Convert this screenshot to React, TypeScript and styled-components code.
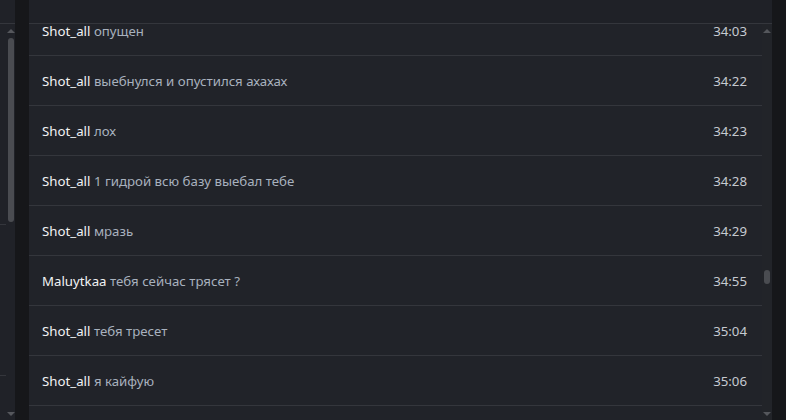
import React from 'react';
import styled, { createGlobalStyle } from 'styled-components';

const GlobalStyle = createGlobalStyle`
  html, body {
    margin: 0;
    padding: 0;
    background: #16171a;
    overflow: hidden;
  }
`;

const Screen = styled.div`
  display: flex;
  width: 786px;
  height: 420px;
  overflow: hidden;
  background: #16171a;
  font-family: 'Noto Sans', 'Open Sans', sans-serif;
`;

// Left pane peeking in from the previous window
const SidePane = styled.div`
  display: flex;
  width: 15px;
  flex-shrink: 0;
  background: #202228;
  position: relative;
`;

const SideList = styled.div`
  width: 6px;
  display: flex;
  flex-direction: column;
  padding-top: 23px;
`;

const SideRow = styled.div<{ $h: number }>`
  height: ${(p) => p.$h}px;
  border-top: 1px solid #34363c;
  flex-shrink: 0;
`;

const SideTopLine = styled.div`
  position: absolute;
  left: 0;
  right: 0;
  top: 23px;
  height: 1px;
  background: #34363c;
`;

const ScrollTrack = styled.div<{ $w: number; $bg?: string }>`
  width: ${(p) => p.$w}px;
  flex-shrink: 0;
  display: flex;
  flex-direction: column;
  align-items: center;
  background: ${(p) => p.$bg || 'transparent'};
`;

const Spacer = styled.div<{ $h?: number }>`
  flex: ${(p) => (p.$h === undefined ? 1 : 'none')};
  height: ${(p) => (p.$h === undefined ? 'auto' : `${p.$h}px`)};
`;

const Arrow = styled.div<{ $down?: boolean }>`
  width: 0;
  height: 0;
  border-left: 4px solid transparent;
  border-right: 4px solid transparent;
  ${(p) => (p.$down ? 'border-top: 4px solid #55575c;' : 'border-bottom: 4px solid #55575c;')}
`;

const Thumb = styled.div<{ $h: number }>`
  width: 6px;
  height: ${(p) => p.$h}px;
  border-radius: 3px;
  background: #4a4c51;
`;

const Gutter = styled.div`
  width: 14px;
  flex-shrink: 0;
  background: #16171a;
`;

const Panel = styled.div`
  position: relative;
  display: flex;
  width: 743px;
  flex-shrink: 0;
  background: #212329;
`;

const PanelHeader = styled.div`
  position: absolute;
  left: 0;
  right: 0;
  top: 0;
  height: 23px;
  background: #1f2127;
  border-bottom: 1px solid #34363c;
  z-index: 1;
`;

const MessageList = styled.div`
  flex: 1;
  display: flex;
  flex-direction: column;
  padding-top: 6px;
`;

const Row = styled.div`
  height: 49px;
  flex-shrink: 0;
  display: flex;
  align-items: center;
  justify-content: space-between;
  padding: 0 15px 0 13px;
  border-bottom: 1px solid #34363c;
  font-size: 13.25px;
`;

const Body = styled.div`
  white-space: nowrap;
`;

const Author = styled.span`
  color: #f1f2f4;
`;

const Text = styled.span`
  color: #a8b1be;
`;

const Time = styled.span`
  color: #c6cad1;
`;

const messages = [
  { author: 'Shot_all', text: 'опущен', time: '34:03' },
  { author: 'Shot_all', text: 'выебнулся и опустился ахахах', time: '34:22' },
  { author: 'Shot_all', text: 'лох', time: '34:23' },
  { author: 'Shot_all', text: '1 гидрой всю базу выебал тебе', time: '34:28' },
  { author: 'Shot_all', text: 'мразь', time: '34:29' },
  { author: 'Maluytkaa', text: 'тебя сейчас трясет ?', time: '34:55' },
  { author: 'Shot_all', text: 'тебя тресет', time: '35:04' },
  { author: 'Shot_all', text: 'я кайфую', time: '35:06' },
];

const App: React.FC = () => {
  return (
    <>
      <GlobalStyle />
      <Screen>
        <SidePane>
          <SideTopLine />
          <SideList>
            <SideRow $h={200} />
            <SideRow $h={150} />
            <SideRow $h={50} />
          </SideList>
          <ScrollTrack $w={9}>
            <Spacer $h={29} />
            <Arrow />
            <Spacer $h={5} />
            <Thumb $h={184} />
            <Spacer />
            <Arrow $down />
            <Spacer $h={4} />
          </ScrollTrack>
        </SidePane>
        <Gutter />
        <Panel>
          <PanelHeader />
          <MessageList>
            {messages.map((m, i) => (
              <Row key={i}>
                <Body>
                  <Author>{m.author}</Author> <Text>{m.text}</Text>
                </Body>
                <Time>{m.time}</Time>
              </Row>
            ))}
            <Row />
          </MessageList>
          <ScrollTrack $w={10} $bg="#222429">
            <Spacer $h={29} />
            <Arrow />
            <Spacer $h={237} />
            <Thumb $h={14} />
            <Spacer />
            <Arrow $down />
            <Spacer $h={4} />
          </ScrollTrack>
        </Panel>
        <Gutter />
      </Screen>
    </>
  );
};

export default App;
